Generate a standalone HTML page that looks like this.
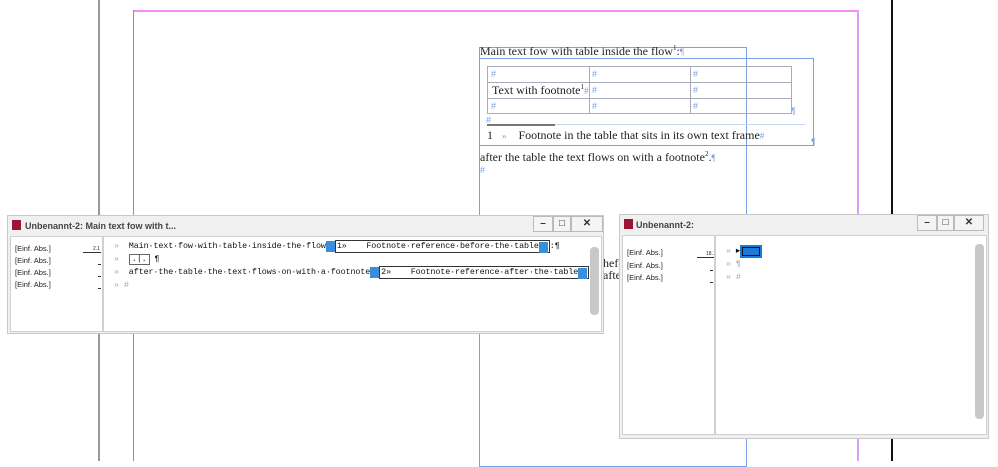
<!DOCTYPE html>
<html><head><meta charset="utf-8"><style>
*{margin:0;padding:0;box-sizing:border-box}
body{width:998px;height:461px;background:#fff;position:relative;overflow:hidden;font-family:"Liberation Sans",sans-serif}
.a{position:absolute}
.serif{font-family:"Liberation Serif",serif;font-size:12px;color:#222;white-space:nowrap}
.h{color:#7aa0e0;font-size:9px}
.win{position:absolute;background:#f0f0f0;border:1px solid #c8c8c8}
.tb{position:absolute;left:0;right:0;top:0;height:18px;font-size:9px;font-weight:bold;color:#444}
.ico{position:absolute;left:4px;top:4px;width:9px;height:10px;background:#9b1335}
.btn{position:absolute;top:0;height:16px;border:1px solid #bbb;background:#f4f4f4;font-size:10px;text-align:center;line-height:14px;color:#333}
.pane{position:absolute;background:#fff;border:1px solid #d0d0d0}
.lbl{position:absolute;font-size:7.5px;color:#222}
.mono{position:absolute;font-family:"Liberation Mono",monospace;font-size:8.4px;color:#111;white-space:nowrap;letter-spacing:-0.1px;line-height:13px;height:13px}
.g{color:#aaa}
.fn{display:inline-block;border:1px solid #333;padding:0 1px;height:13px;line-height:11px;vertical-align:top}
.bl{display:inline-block;background:#3a8fdc;width:9px;height:11px;vertical-align:top;margin-top:1px}
</style></head><body>
<div class="a" style="left:98px;top:0;width:2px;height:461px;background:#999"></div>
<div class="a" style="left:133px;top:10px;width:726px;height:2px;background:#f58cf5"></div>
<div class="a" style="left:133px;top:10px;width:1px;height:451px;background:#b070f0"></div>
<div class="a" style="left:857px;top:10px;width:2px;height:451px;background:#d8a0f8"></div>
<div class="a" style="left:891px;top:0;width:2px;height:461px;background:#111"></div>
<!-- frames -->
<div class="a" style="left:479px;top:47px;width:268px;height:420px;border:1px solid #7aa0e8"></div>
<div class="a" style="left:479px;top:58px;width:335px;height:88px;border:1px solid #7aa0e8"></div>
<div class="a serif" style="left:480px;top:44px">Main text fow with table inside the flow<sup style="font-size:7px">1</sup>:<span class="h">¶</span></div>
<div class="a" style="left:487px;top:66px;width:305px;height:48px;border:1px solid #aab">
<div class="a" style="left:0;top:15px;width:303px;height:1px;background:#aab"></div>
<div class="a" style="left:0;top:31px;width:303px;height:1px;background:#aab"></div>
<div class="a" style="left:101px;top:0;width:1px;height:46px;background:#aab"></div>
<div class="a" style="left:202px;top:0;width:1px;height:46px;background:#aab"></div>
<span class="a h" style="left:3px;top:2px">#</span><span class="a h" style="left:104px;top:2px">#</span><span class="a h" style="left:205px;top:2px">#</span>
<span class="a serif" style="left:4px;top:16px">Text with footnote<sup style="font-size:7px">1</sup><span class="h">#</span></span><span class="a h" style="left:104px;top:18px">#</span><span class="a h" style="left:205px;top:18px">#</span>
<span class="a h" style="left:3px;top:34px">#</span><span class="a h" style="left:104px;top:34px">#</span><span class="a h" style="left:205px;top:34px">#</span>
</div>
<span class="a h" style="left:791px;top:106px">¶</span>
<span class="a h" style="left:486px;top:115px">#</span>
<div class="a" style="left:487px;top:124px;width:68px;height:2px;background:#777"></div>
<div class="a" style="left:555px;top:124px;width:250px;height:1px;background:#c8d8f4"></div>
<div class="a serif" style="left:487px;top:128px">1 &nbsp;&nbsp;<span class="h">»</span> &nbsp;&nbsp;&nbsp;Footnote in the table that sits in its own text frame<span class="h">#</span></div>
<span class="a h" style="left:811px;top:137px">¶</span>
<div class="a serif" style="left:480px;top:150px">after the table the text flows on with a footnote<sup style="font-size:7px">2</sup>.<span class="h">¶</span></div>
<span class="a h" style="left:480px;top:165px">#</span>
<div class="a serif" style="left:603px;top:256px">hefc</div>
<div class="a serif" style="left:603px;top:268px">afte</div>
<!-- window 1 -->
<div class="win" style="left:7px;top:215px;width:597px;height:119px">
<div class="tb"><div class="ico"></div><span class="a" style="left:17px;top:5px">Unbenannt-2: Main text fow with t...</span>
<div class="btn" style="left:525px;width:20px">–</div><div class="btn" style="left:545px;width:18px">□</div><div class="btn" style="left:563px;width:32px">✕</div></div>
<div class="pane" style="left:2px;top:20px;width:93px;height:96px">
<div class="lbl" style="left:4px;top:7px">[Einf. Abs.]</div><div class="lbl" style="left:4px;top:19px">[Einf. Abs.]</div><div class="lbl" style="left:4px;top:31px">[Einf. Abs.]</div><div class="lbl" style="left:4px;top:43px">[Einf. Abs.]</div>
<div class="a" style="left:72px;top:15px;width:18px;height:1px;background:#333"></div>
<div class="lbl" style="left:82px;top:9px;font-size:5px">2.1</div>
<div class="a" style="left:87px;top:27px;width:3px;height:1px;background:#333"></div>
<div class="a" style="left:87px;top:39px;width:3px;height:1px;background:#333"></div>
<div class="a" style="left:87px;top:51px;width:3px;height:1px;background:#333"></div>
</div>
<div class="pane" style="left:94px;top:20px;width:500px;height:96px;border-left:2px solid #d0d0d0">
<div class="mono" style="left:10px;top:3px"><span class="g">»</span>&nbsp; Main·text·fow·with·table·inside·the·flow<span class="bl"></span><span class="fn">1» &nbsp;&nbsp;&nbsp;Footnote·reference·before·the·table<span class="bl"></span></span>:¶</div>
<div class="mono" style="left:10px;top:16px"><span class="g">»</span>&nbsp; <span style="border:1px solid #666;padding:0 2px;line-height:9px;display:inline-block">.|.</span> ¶</div>
<div class="mono" style="left:10px;top:29px"><span class="g">»</span>&nbsp; after·the·table·the·text·flows·on·with·a·footnote<span class="bl"></span><span class="fn">2» &nbsp;&nbsp;&nbsp;Footnote·reference·after·the·table<span class="bl"></span></span>.¶</div>
<div class="mono" style="left:10px;top:42px"><span class="g">» #</span></div>
<div class="a" style="right:2px;top:10px;width:9px;height:68px;background:#c8c8c8;border-radius:4px"></div>
</div>
</div>
<!-- window 2 -->
<div class="win" style="left:619px;top:214px;width:370px;height:225px">
<div class="tb"><div class="ico"></div><span class="a" style="left:16px;top:5px">Unbenannt-2:</span>
<div class="btn" style="left:297px;width:20px">–</div><div class="btn" style="left:317px;width:17px">□</div><div class="btn" style="left:334px;width:30px">✕</div></div>
<div class="pane" style="left:2px;top:20px;width:93px;height:200px">
<div class="lbl" style="left:4px;top:12px">[Einf. Abs.]</div><div class="lbl" style="left:4px;top:25px">[Einf. Abs.]</div><div class="lbl" style="left:4px;top:37px">[Einf. Abs.]</div>
<div class="a" style="left:74px;top:21px;width:17px;height:1px;background:#333"></div>
<div class="lbl" style="left:83px;top:15px;font-size:5px">18.1</div>
<div class="a" style="left:87px;top:34px;width:3px;height:1px;background:#333"></div>
<div class="a" style="left:87px;top:46px;width:3px;height:1px;background:#333"></div>
</div>
<div class="pane" style="left:94px;top:20px;width:273px;height:200px;border-left:2px solid #d0d0d0">
<div class="mono" style="left:10px;top:9px"><span class="g">»</span> ▸</div>
<div class="a" style="left:24px;top:9px;width:22px;height:13px;background:#1a7ad8"><div style="margin:2px;height:9px;border:1px solid #112"></div></div>
<div class="mono" style="left:10px;top:22px"><span class="g">» ¶</span></div>
<div class="mono" style="left:10px;top:35px"><span class="g">» #</span></div>
<div class="a" style="right:2px;top:8px;width:9px;height:175px;background:#c8c8c8;border-radius:4px"></div>
</div>
</div>
</body></html>
